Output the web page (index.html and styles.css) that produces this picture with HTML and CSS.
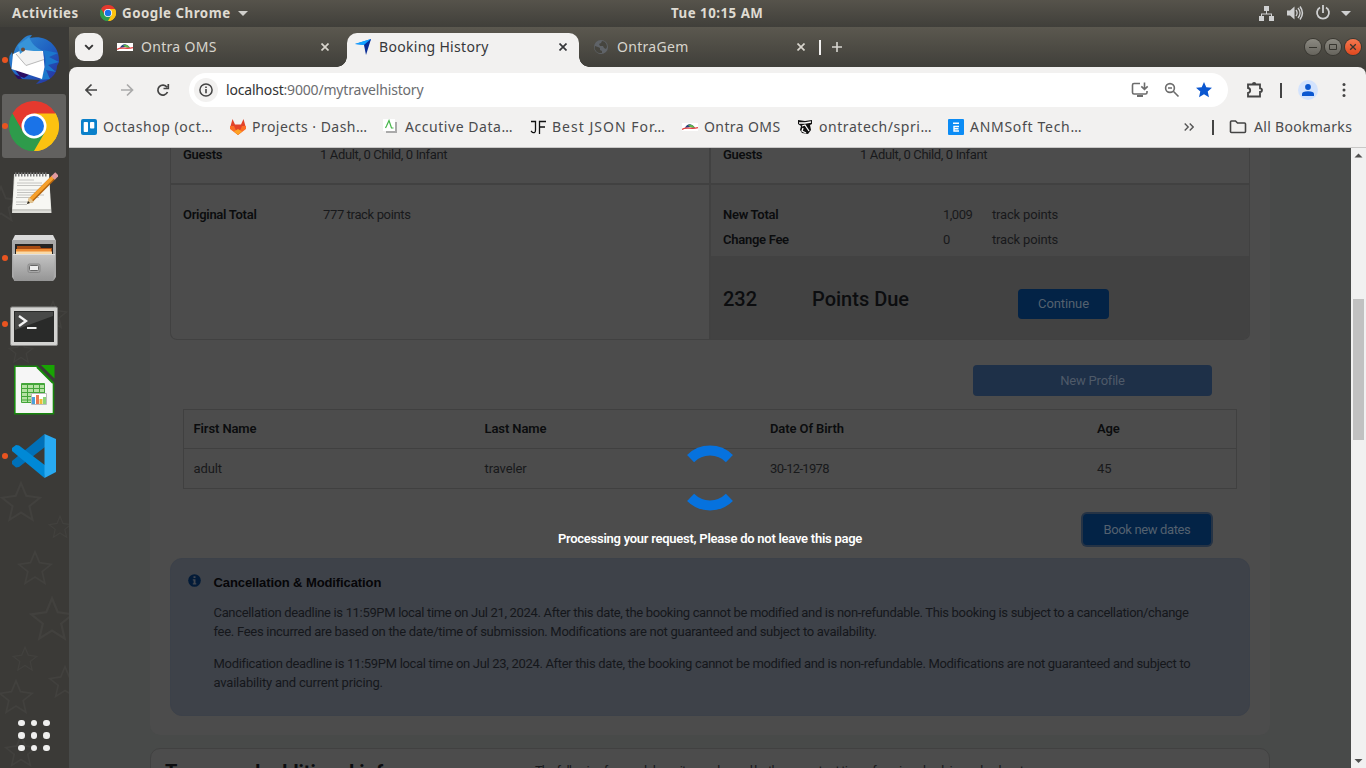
FILE: index.html
```html
<!DOCTYPE html>
<html lang="en">
<head>
<meta charset="utf-8">
<title>Booking History</title>
<link rel="stylesheet" href="styles.css">
</head>
<body>
<svg width="0" height="0" class="defs" viewBox="0 0 48 48">
  <defs>
    <symbol id="chrome" viewBox="0 0 48 48">
      <path fill="#e5392e" d="M24 24 3.200 12A24 24 0 0 1 44.800 12Z"/>
      <path fill="#fcc210" d="M24 24 44.800 12A24 24 0 0 1 24 48L22 40Z"/>
      <path fill="#2e9b4b" d="M24 24 24 48A24 24 0 0 1 3.200 12Z"/>
      <path fill="#e5392e" d="M3.200 12 13.600 30 24 12Z"/>
      <path fill="#fcc210" d="M24 48 34.400 30 24 12H44.800A24 24 0 0 1 24 48Z"/>
      <path fill="#2e9b4b" d="M3.200 12 13.600 30 34.400 30 24 48A24 24 0 0 1 3.200 12Z"/>
      <circle cx="24" cy="24" r="12" fill="#fff"/><circle cx="24" cy="24" r="9.600" fill="#1a73e8"/>
    </symbol>
    <symbol id="ontra" viewBox="0 0 16 16">
      <path fill="#fff" d="M0 4h16v8H0z"/><path fill="#27407e" d="M3 9C5 4 10 4 13 9L8 8Z"/><path fill="#5fb54a" d="M6 6C10 5 12 7 13 9L8 8Z"/>
      <path d="M0 10.500C4 7 9 11 16 8.500" fill="none" stroke="#e43d3d" stroke-width="1.200"/>
    </symbol>
    <symbol id="star" viewBox="0 0 40 40"><path d="M20 2 25 14 38 16 28 24 31 37 20 30 9 37 12 24 2 16 15 14Z" fill="none" stroke="#42413e" stroke-width="2"/></symbol>
  </defs>
</svg>

<header class="topbar">
  <span class="activities">Activities</span>
  <svg class="app-icon" width="16" height="16"><use href="#chrome"/></svg>
  <span class="app-name">Google Chrome</span>
  <svg class="caret" width="10" height="5" viewBox="0 0 10 5"><path fill="#d0cfcb" d="M0 0h10L5 5z"/></svg>
  <span class="clock">Tue 10:15 AM</span>
  <svg class="tray" width="94" height="18" viewBox="1258 4 94 18">
    <g fill="#cfd0d1"><path d="M1264 6h5v5h-5zM1259 16h5v5h-5zM1269 16h5v5h-5z"/><path d="M1266 11h1v2.500h5V16h-1v-1.500h-9V16h-1v-2.500h5z"/>
    <path d="M1287 10.500h3l4.500-4v13l-4.500-4h-3zM1341 11h10l-5 5z"/></g>
    <g fill="none" stroke="#cfd0d1"><path stroke-width="1.300" d="M1296 10c1.500 2 1.500 4 0 6M1298 8c2.500 3 2.500 7 0 10"/><path stroke-width="1.500" d="M1300 6.500c3 4 3 9 0 13"/><path stroke-width="1.800" d="M1320 7.500a6 6 0 1 0 6 0M1323 5v8"/></g>
  </svg>
</header>

<div class="desktop">
  <nav class="dock">
    <svg class="dock-bg" width="69" height="741" viewBox="0 27 69 741">
      <use href="#star" x="0" y="481" width="42" height="42"/><use href="#star" x="48" y="515" width="24" height="24"/><use href="#star" x="17" y="550" width="36" height="36"/><use href="#star" x="29" y="596" width="46" height="46"/><use href="#star" x="12" y="646" width="26" height="26"/><use href="#star" x="48" y="665" width="34" height="34"/><use href="#star" x="-2" y="679" width="36" height="36"/><use href="#star" x="4" y="734" width="34" height="34"/><use href="#star" x="38" y="300" width="30" height="30"/><use href="#star" x="8" y="338" width="26" height="26"/><use href="#star" x="-18" y="185" width="38" height="38"/>
    </svg>
    <div class="dock-item running">
      <svg width="52" height="52" viewBox="8 34 52 52">
        <defs><linearGradient id="tb" x1="0" y1="0" x2="1" y2="1"><stop offset="0" stop-color="#3292d6"/><stop offset=".55" stop-color="#1f5fc0"/><stop offset="1" stop-color="#2a2a9a"/></linearGradient></defs>
        <path fill="url(#tb)" d="M18 44C22 40 25 35 32 35L30 38C45 34 60 45 59 62L57 66C57 74 50 82 36 84L40 80 22 79C13 75 8 66 9.500 56L12 52 13 57C14 51 15 48 18 44Z"/>
        <path fill="#2b0d63" d="M12 66 22 79 18 79 14 74 24 78 30 74Z"/>
        <path fill="#1b78cd" d="M43 50 58 53 49 57 59 62 48 65 56 72 46 70 50 79 40 80C46 68 47 59 43 50Z"/>
        <path fill="#fff" d="M13 54 22 50 43 51 44.500 67 42 79 11.500 69Z"/>
        <path fill="#f2f2f2" d="M16 54 26 65.500 44 59.500 42 51 22 50Z"/><path d="M16 54 26 65.500 44 59.500" fill="none" stroke="#b9b9b9"/>
        <path fill="#3794d8" d="M18 45 29 37C32 44 36 48 43 51L34 51 25 50 20 54Z"/><circle cx="23" cy="49.500" r="2" fill="#6b4938"/>
      </svg>
    </div>
    <div class="dock-item running active"><svg width="50" height="50"><use href="#chrome"/></svg></div>
    <div class="dock-item lower">
      <svg width="48" height="48" viewBox="11 169 48 48">
        <path fill="#ddddd8" d="M15 174H50L52.500 213H13Z"/><path fill="#f7f7f3" d="M16 174H50L51.500 209H13.500Z"/><path d="M13 210H52" stroke="#bdbdb8"/>
        <path d="M16 174.500H49" stroke="#777" stroke-width="4" stroke-dasharray="1.500 1.500"/>
        <path stroke="#c4c4c1" stroke-width="1" d="M20 180H35M18 183H43M18 185.500H45M18 190H43M18 192.500H40M18 195H45M17 197.500H40M17 202H34M17 204.500H28"/>
        <path d="M31 201 55 177" stroke="#b4650f" stroke-width="5.200"/><path d="M31 200 54 177" stroke="#f6a02c" stroke-width="3.500"/><path fill="#e3c590" d="M28 204 30 197 35 202Z"/><path d="M54 178 58 174" stroke="#e09aa0" stroke-width="5"/><path fill="#222" d="m28 204 1-3 2 2z"/>
      </svg>
    </div>
    <div class="dock-item running lower">
      <svg width="46" height="48" viewBox="11 234 46 48">
        <defs><linearGradient id="cab" x1="0" y1="0" x2="0" y2="1"><stop offset="0" stop-color="#c3c3c3"/><stop offset="1" stop-color="#959595"/></linearGradient></defs>
        <path fill="#dadada" d="M15 234H53L56 240H12Z"/><path fill="#a9a9a9" d="M12 239H56V276L54 279H14L12 276Z"/><path fill="#252423" d="M15 243H53V256H15Z"/>
        <path fill="#a64b13" d="M17 245H40L41 247H52V253H17Z"/><path fill="#ed8d35" d="M16 248H51V253H16Z"/><path fill="#f9d9a6" d="M16 250.500H52V254H16Z"/>
        <path fill="url(#cab)" d="M13 253.500H55L53.500 280H14Z"/><path d="M13 253.500H55" stroke="#dedede"/>
        <rect x="28" y="263" width="12" height="8.500" rx="1.500" fill="#a8a8a8" stroke="#888"/><rect x="29.500" y="264.500" width="9" height="5" rx="1" fill="#eee" stroke="#666"/>
      </svg>
    </div>
    <div class="dock-item running lowest">
      <svg width="48" height="40" viewBox="10 306 48 40">
        <rect x="10.500" y="307" width="47" height="38.500" rx="1.500" fill="#d3d3d1" stroke="#8c8c8a"/><rect x="14" y="311" width="40" height="31" fill="#292a29"/><path fill="#484948" d="M15 312H53V316L15 330Z"/>
        <path d="M19 316 26 321 19 326" fill="none" stroke="#f3f3f3" stroke-width="2.300"/><path fill="#eee" d="M27 327h9.500v2H27z"/>
      </svg>
    </div>
    <div class="dock-item">
      <svg width="42" height="50" viewBox="13 365 42 50">
        <path fill="#f6f6f6" stroke="#17860c" stroke-width="1.600" d="M14.800 366.300H37L53.500 383V413.800H14.800Z"/><path fill="#18a303" d="M41 365H54.500V378.500Z"/><path d="M37 367 53 383" stroke="#17860c" stroke-width="2"/>
        <path fill="#b5e2a3" stroke="#43a539" d="M21.500 383.500H44.500V402.500H21.500Z"/><path d="M21 384.500H45M21 388.500H45M21 392.500H45M21 396.500H45M21 400H45M27.500 383V403M33.500 383V403M39.500 383V403" stroke="#43a539"/>
        <path fill="#fff" stroke="#bbb" d="M31.500 393.500H46.500V404.500H31.500Z"/><path fill="#4da0db" d="M32 397h3v7h-3z"/><path fill="#ea7850" d="M36 395h3v9h-3z"/><path fill="#edbd36" d="M39.500 399h3v5h-3z"/><path fill="#8bd478" d="M43 397h3v7h-3z"/>
      </svg>
    </div>
    <div class="dock-item running">
      <svg width="44" height="44" viewBox="12 434 44 44">
        <path fill="#0070b8" d="M44.500 434 12 461V464L16 467.500 19 467 45 447Z"/><path fill="#0089d6" d="M12 448 16 445 19 445.500 46 466 44.500 478 12 451Z"/><path fill="#28aaf2" d="M44.500 434 56 439V472L44.500 478Z"/>
      </svg>
    </div>
    <div class="dock-apps"><i></i><i></i><i></i><i></i><i></i><i></i><i></i><i></i><i></i></div>
  </nav>

  <main class="window">
    <div class="tabstrip">
      <button class="tab-search"><svg width="10" height="7" viewBox="0 0 10 7"><path d="M1.200 1.200 5 5 8.800 1.200" fill="none" stroke="#333" stroke-width="1.900"/></svg></button>
      <div class="tab tab-first"><svg width="16" height="16"><use href="#ontra"/></svg><span class="tab-title">Ontra OMS</span><svg class="close" width="8" height="8" viewBox="0 0 8 8"><path d="M.5.5 7.500 7.500M7.500.5.500 7.500"/></svg></div>
      <div class="tab tab-current"><svg width="16" height="16" viewBox="0 0 16 16"><path fill="#0b6df0" d="M0 5 16 0 12 9 10 6Z"/><path fill="#11a2ff" d="M0 5 16 0 9 6Z"/><path fill="#092d96" d="M9 6 16 0 11 16Z"/></svg><span class="tab-title">Booking History</span><svg class="close" width="8" height="8" viewBox="0 0 8 8"><path d="M.5.5 7.500 7.500M7.500.5.500 7.500"/></svg></div>
      <div class="tab tab-last"><svg width="16" height="16" viewBox="0 0 16 16"><circle cx="8" cy="8" r="7" fill="#5f6368"/><path fill="#46453f" d="M2 7 5 8 7 9V11L9 12V14L6 14C3 13 1 10 2 7ZM9 2 8 4 6 5 7 7 10 7 11 9 13 10 14 8C14 5 12 2 9 2Z"/></svg><span class="tab-title">OntraGem</span><svg class="close" width="8" height="8" viewBox="0 0 8 8"><path d="M.5.5 7.500 7.500M7.500.5.500 7.500"/></svg></div>
      <i class="tab-bar"></i>
      <svg class="plus" width="10" height="10" viewBox="0 0 10 10"><path d="M5 0v10M0 5h10" stroke="#d8d6d0" stroke-width="1.600"/></svg>
      <div class="controls">
        <svg width="16" height="16" viewBox="0 0 16 16"><path d="M4 8.500h8"/></svg>
        <svg width="16" height="16" viewBox="0 0 16 16"><path d="M4.500 5.500h7v5h-7z"/></svg>
        <svg class="quit" width="16" height="16" viewBox="0 0 16 16"><path d="m5.200 5.200 5.600 5.600m0-5.600-5.600 5.600"/></svg>
      </div>
    </div>

    <div class="chrome-body">
      <div class="toolbar">
        <svg class="nav-icons" width="90" height="14" viewBox="0 0 90 14"><g fill="none" stroke="#444" stroke-width="1.700"><path d="M12 7H1.500M6.500 1.500 1 7l5.500 5.500"/><path stroke="#aaa" d="M36 7h11M42 1.500 47.500 7 42 12.500"/><path d="M82 4.200A5 5 0 1 0 82.500 9M83.300 1v4.500H78.500"/></g></svg>
        <div class="omnibox">
          <span class="site-info"><svg width="14" height="14" viewBox="0 0 14 14"><circle cx="7" cy="7" r="6.100" fill="none" stroke="#444" stroke-width="1.500"/><path fill="#444" d="M6.200 6h1.600v4.300H6.200zM6.200 3.500h1.600V5H6.200z"/></svg></span>
          <span class="url"><b>localhost</b>:9000/mytravelhistory</span>
          <svg class="omni-icons" width="82" height="18" viewBox="1131 81 82 18"><g fill="none" stroke="#6c6c6c" stroke-width="1.600"><path d="M1140 83.500H1134Q1132.500 83.500 1132.500 85V92.500Q1132.500 94 1134 94H1145.500Q1147 94 1147 92.500V91M1144.500 82.500V89M1141.300 86.300 1144.500 89.300 1147.700 86.300"/><circle cx="1170" cy="88" r="4.400"/><path d="M1173.300 91.300 1178.500 96.500M1168 88H1172"/></g><path fill="#6c6c6c" d="M1137 95h6v2h-6z"/><path fill="#0b57d0" d="M1204 82 1206.300 87.300 1212 87.800 1207.700 91.600 1209 97.300 1204 94.300 1199 97.300 1200.300 91.600 1196 87.800 1201.700 87.300Z"/></svg>
        </div>
        <svg class="ext" width="18" height="18" viewBox="0 0 18 18"><path d="M2 3.500H14V7.300Q16 7.300 16 9Q16 11 14 11V15.500H2V12Q4.200 11.700 4.200 9.500Q4.200 7.300 2 7Z" fill="none" stroke="#444" stroke-width="1.800"/><path fill="#444" d="M6 3a2.100 2.100 0 0 1 4.200 0z"/></svg>
        <i class="divider"></i>
        <span class="avatar"><svg width="12" height="12" viewBox="0 0 12 12"><circle cx="6" cy="3" r="2.900" fill="#0b57d0"/><path fill="#0b57d0" d="M0 12V10Q0 7.300 6 7.300T12 10V12Z"/></svg></span>
        <svg width="4" height="14" viewBox="0 0 4 14"><g fill="#444"><circle cx="2" cy="1.600" r="1.500"/><circle cx="2" cy="7" r="1.500"/><circle cx="2" cy="12.400" r="1.500"/></g></svg>
      </div>
      <div class="bookmarks">
        <div class="bm bm-a"><svg width="16" height="16" viewBox="0 0 16 16"><rect width="16" height="16" rx="2" fill="#0a80ca"/><rect x="2.700" y="3" width="4.300" height="10" rx=".8" fill="#fff"/><rect x="9" y="3" width="4.300" height="6.500" rx=".8" fill="#fff"/></svg><span>Octashop (oct…</span></div>
        <div class="bm bm-b"><svg width="16" height="16" viewBox="0 0 16 16"><path fill="#e24329" d="M2.500 0 5 5.500H11L13.500 0 16 9 8 16 0 9Z"/><path fill="#fc6d26" d="M0 7 4 7 8 16 0 10ZM16 7 12 7 8 16 16 10Z"/><path fill="#fca326" d="m8 16-4-3.500L8 10l4 2.500z"/></svg><span>Projects · Dash…</span></div>
        <div class="bm bm-c"><svg width="16" height="16" viewBox="0 0 16 16"><path fill="#aaa" d="M3 3h11v11H3z"/><path fill="#fff" d="M0 0h12v12H0z"/><path d="M2.500 9 3.500 7 6 1.500 8.500 9H10.500" fill="none" stroke="#45b649" stroke-width="1.200"/></svg><span>Accutive Data…</span></div>
        <div class="bm bm-d"><svg width="16" height="16" viewBox="0 0 16 16"><path d="M1 2.500H5.500V11Q5.500 14.500 2.500 13.500L1 12M9.500 15V2.500H16M9.500 8H15" fill="none" stroke="#111" stroke-width="1.300"/></svg><span>Best JSON For…</span></div>
        <div class="bm bm-e"><svg width="16" height="16"><use href="#ontra"/></svg><span>Ontra OMS</span></div>
        <div class="bm bm-f"><svg width="16" height="16" viewBox="0 0 16 16"><path fill="#111" d="M1 1 8 2 15 1V5L13 6 14 11 11 15 5 14 3 11 4 7 1 5Z"/><path d="M2 4 8 4 14 3M5 7 8 6 10 9 12 12M6 9 5 12 9 14" stroke="#fff" fill="none" stroke-width="1.300"/></svg><span>ontratech/spri…</span></div>
        <div class="bm bm-g"><svg width="16" height="16" viewBox="0 0 16 16"><rect width="16" height="16" rx="1" fill="#0c8cf5"/><path d="M5 4.200H11M11 7.500H6V12H11M6 9.700H10.500" fill="none" stroke="#fff" stroke-width="1.400"/></svg><span>ANMSoft Tech…</span></div>
        <svg class="more" width="10" height="8" viewBox="0 0 10 8"><path d="m.7.5 3.500 3.500L.7 7.500M5.700.500 9.200 4 5.700 7.500" fill="none" stroke="#555" stroke-width="1.400"/></svg>
        <i class="divider"></i>
        <svg class="folder" width="18" height="14" viewBox="0 0 18 14"><path d="M1.500 12V2Q1.500 1 2.500 1H6.500L8.500 3H15.500Q16.500 3 16.500 4V11.500Q16.500 12.500 15.500 12.500H2.500Q1.500 12.500 1.500 11.500Z" fill="none" stroke="#444" stroke-width="1.600"/></svg>
        <span class="all">All Bookmarks</span>
      </div>
    </div>

    <div class="viewport">
      <div class="page">
        <section class="card">
          <div class="compare">
            <div class="cell guests"><b>Guests</b><span>1 Adult, 0 Child, 0 Infant</span></div>
            <div class="cell guests right"><b>Guests</b><span>1 Adult, 0 Child, 0 Infant</span></div>
            <div class="cell original"><b>Original Total</b><span>777 track points</span></div>
            <div class="right totals">
              <div class="rows">
                <div class="row"><b>New Total</b><span class="num">1,009</span><span class="unit">track points</span></div>
                <div class="row"><b>Change Fee</b><span class="num">0</span><span class="unit">track points</span></div>
              </div>
              <div class="due"><strong class="amount">232</strong><strong class="due-label">Points Due</strong><button class="btn continue">Continue</button></div>
            </div>
          </div>
          <button class="btn new-profile">New Profile</button>
          <div class="people">
            <div class="prow head"><span>First Name</span><span>Last Name</span><span>Date Of Birth</span><span>Age</span></div>
            <div class="prow"><span>adult</span><span>traveler</span><span class="dob">30-12-1978</span><span>45</span></div>
          </div>
          <button class="btn book">Book new dates</button>
          <div class="notice">
            <svg width="13" height="13" viewBox="0 0 13 13"><circle cx="6.500" cy="6.500" r="6.300" fill="#031b38"/><path fill="#42474f" d="M5.500 2.300h2v1.800h-2zM4.800 5.300h2.700v3.900h.8v1.200H4.800V9.200h.8V6.500h-.8z"/></svg>
            <div class="notice-text">
              <h2>Cancellation &amp; Modification</h2>
              <p><span class="l1">Cancellation deadline is 11:59PM local time on Jul 21, 2024. After this date, the booking cannot be modified and is non-refundable. This booking is subject to a cancellation/change</span><br><span class="l2">fee. Fees incurred are based on the date/time of submission. Modifications are not guaranteed and subject to availability.</span></p>
              <p><span class="l3">Modification deadline is 11:59PM local time on Jul 23, 2024. After this date, the booking cannot be modified and is non-refundable. Modifications are not guaranteed and subject to</span><br><span class="l4">availability and current pricing.</span></p>
            </div>
          </div>
        </section>
        <section class="card terms"><h2>Terms and additional info</h2><p>The following fees and deposits are charged by the property at time of service, check-in, or check-out.</p></section>
        <div class="loader">
          <svg width="66" height="66" viewBox="-33 -33 66 66"><g fill="none" stroke="#0672de" stroke-width="10"><path d="M-19.400-19.400A27.500 27.500 0 0 1 19.400-19.400M-19.400 19.400A27.500 27.500 0 0 0 19.400 19.400"/></g></svg>
          <span>Processing your request, Please do not leave this page</span>
        </div>
      </div>
      <div class="scrollbar">
        <svg width="15" height="15" viewBox="0 0 15 15"><path fill="#505050" d="M3.500 9.500h8l-4-4z"/></svg>
        <i class="thumb"></i>
        <svg width="15" height="15" viewBox="0 0 15 15"><path fill="#505050" d="M3.500 6h8l-4 4z"/></svg>
      </div>
    </div>
  </main>
</div>
</body>
</html>
```
FILE: styles.css
```css
* { box-sizing: border-box; }
body { margin: 0; width: 1366px; height: 768px; overflow: hidden; font-family: "Noto Sans", "Open Sans", sans-serif; font-size: 14px; display: flex; flex-direction: column; background: #3c3b37; }
.defs { position: absolute; }
svg { flex: none; display: block; }
i { display: block; flex: none; }
button { border: 0; padding: 0; font: inherit; }

.topbar { height: 27px; flex: none; display: flex; align-items: center; padding: 0 14px 1px 12px; background: linear-gradient(#56534b, #403f3a); color: #dfdbd2; font-size: 13.300px; font-weight: 700; letter-spacing: .5px; white-space: nowrap; }
.activities { width: 88px; }
.app-name { margin-left: 6px; width: 112px; }
.caret { margin-left: 4px; }
.clock { margin-left: 423px; width: 96px; }
.tray { margin-left: auto; }

.desktop { flex: 1; display: flex; min-height: 0; }
.dock { position: relative; width: 69px; flex: none; background: #3b3a37; display: flex; flex-direction: column; }
.dock-bg { position: absolute; inset: 0; }
.dock-item { position: relative; height: 66px; width: 68px; display: flex; align-items: center; justify-content: center; }
.lower { padding-top: 2px; }
.lowest { padding-top: 3px; }
.running::before { content: ""; position: absolute; left: 2px; top: 30px; width: 6px; height: 6px; border-radius: 3px; background: #e95420; }
.active::after { content: ""; position: absolute; left: 2px; top: 1px; width: 64px; height: 64px; border-radius: 3px; background: rgba(255,255,255,.2); z-index: 0; }
.active::before { z-index: 1; }
.active svg { position: relative; z-index: 1; }
.dock-apps { position: relative; margin: auto 0 17px 18px; display: grid; grid-template-columns: repeat(3, 6.500px); gap: 6px; }
.dock-apps i { height: 6.500px; border-radius: 50%; background: #efefee; }

.window { flex: 1; display: flex; flex-direction: column; min-width: 0; background: linear-gradient(#5b584f 0, #403f3a 40px); }
.tabstrip { height: 40px; flex: none; display: flex; align-items: center; padding: 0 5px 0 6px; }
.tab-search { width: 28px; height: 28px; border-radius: 9px; background: #f2f1f0; display: grid; place-items: center; }
.tab { display: flex; align-items: center; color: #d8d5cd; height: 34px; margin-top: 6px; padding-bottom: 6px; letter-spacing: .3px; }
.tab-title { margin-left: 8px; flex: 1; line-height: 20px; }
.close { fill: none; stroke: currentColor; stroke-width: 1.700; }
.tab-first { width: 212px; margin-left: 14px; }
.tab-current { width: 232px; margin-left: 18px; padding: 0 12px 6px 8px; background: #f2f1f0; color: #36373a; border-radius: 10px 10px 0 0; position: relative; }
.tab-current::before, .tab-current::after { content: ""; position: absolute; bottom: 0; width: 10px; height: 10px; }
.tab-current::before { left: -10px; background: radial-gradient(circle at 0 0, transparent 9.500px, #f2f1f0 10px); }
.tab-current::after { right: -10px; background: radial-gradient(circle at 100% 0, transparent 9.500px, #f2f1f0 10px); }
.tab-last { width: 212px; margin-left: 14px; }
.tab-bar { width: 2px; height: 15px; background: #f2f1f0; margin-left: 14px; }
.plus { margin-left: 11px; }
.controls { margin-left: auto; display: flex; gap: 4px; }
.controls svg { border-radius: 50%; background: linear-gradient(#8c8a82, #66645d); fill: none; stroke: #36352f; box-shadow: 0 0 0 1px #393832; }
.controls .quit { background: linear-gradient(#f4784f, #e1481e); stroke-width: 1.300; }

.chrome-body { height: 81px; flex: none; background: #f2f1f0; border-radius: 8px 8px 0 0; border-bottom: 1px solid #c9c8c7; color: #4a4b4d; }
.toolbar { padding-top: 6px; display: flex; align-items: center; height: 40px; padding-left: 16px; }
.nav-icons { width: 90px; }
.omnibox { margin-left: 14px; width: 1039px; height: 34px; border-radius: 17px; background: #fff; display: flex; align-items: center; padding: 0 15px 0 5px; }
.site-info { width: 24px; height: 24px; border-radius: 50%; background: #f2f1f0; display: grid; place-items: center; }
.url { margin-left: 8px; padding-bottom: 2px; color: #6c6d70; letter-spacing: -.18px; }
.url b { font-weight: 400; color: #333; }
.omni-icons { margin-left: auto; }
.ext { margin-left: 18px; }
.divider { width: 2px; height: 15px; background: #444; margin-left: 16px; }
.avatar { width: 20px; height: 20px; border-radius: 50%; background: #d3e3fd; display: grid; place-items: center; margin: 0 24px 0 16px; }
.bookmarks { height: 40px; display: flex; align-items: center; padding-left: 12px; white-space: nowrap; }
.bm { display: flex; align-items: center; gap: 6px; flex: none; letter-spacing: .55px; }
.bm span, .all { padding-bottom: 2px; }
.bm-a { width: 149px; }
.bm-b { width: 153px; letter-spacing: .47px; }
.bm-c { width: 147px; }
.bm-d { width: 152px; letter-spacing: 1.020px; }
.bm-e { width: 115px; letter-spacing: .4px; }
.bm-f { width: 151px; }
.bm-g { width: 236px; letter-spacing: .7px; }
.all { letter-spacing: .3px; }
.bookmarks .divider { margin-left: 18px; }
.folder { margin: 0 7px 0 15px; }

.viewport { flex: 1; display: flex; min-height: 0; background: #484a49; }
.page { position: relative; flex: 1; overflow: hidden; padding: 0 81px; font: 13px/19px Roboto, sans-serif; color: #18191b; }
.page b, .head { font-weight: 600; color: #0b0c0e; letter-spacing: -.28px; }
.card { width: 1120px; background: #4c4c4c; height: 587px; border-radius: 0 0 10px 10px; padding: 0 20px; display: flex; flex-direction: column; }
.compare { flex: none; height: 192px; display: grid; grid-template-columns: 539px 539px; grid-template-rows: 37px 154px; border: solid #414141; border-width: 0 1px 1px; border-radius: 0 0 7px 7px; overflow: hidden; width: 1080px; }
.cell { display: flex; padding-left: 12px; letter-spacing: -.36px; }
.cell b { width: 137px; }
.guests { border-bottom: 2px solid #414141; line-height: 14px; }
.right { border-left: 2px solid #414141; margin-left: -1px; }
.original { padding-top: 20px; }
.original b { width: 140px; }
.totals { display: flex; flex-direction: column; }
.rows { height: 71px; background: #484848; padding: 17px 0 0 12px; }
.row { display: grid; grid-template-columns: 220px 49px 1fr; line-height: 25px; }
.num { letter-spacing: -.5px; }
.unit { letter-spacing: -.17px; }
.due { flex: 1; background: #424242; display: flex; align-items: flex-start; padding-left: 12px; color: #0c0d0f; }
.due strong { font-size: 20px; line-height: 24px; margin-top: 31px; font-weight: 500; }
.amount { width: 89px; }
.due-label { width: 206px; }
.btn { border-radius: 4px; background: #032346; color: #54616f; flex: none; }
.continue { width: 91px; height: 30px; margin-top: 33px; padding-bottom: 1px; letter-spacing: -.1px; }
.new-profile { width: 239px; height: 31px; margin: 25px 38px 0 auto; background: #1e3048; color: #4f5a68; letter-spacing: -.22px; }
.people { width: 1054px; height: 80px; margin: 13px 0 0 13px; border: 1px solid #404040; flex: none; }
.prow { height: 40px; line-height: 39px; padding-left: 9.500px; display: grid; grid-template-columns: 291px 285.500px 327px 1fr; letter-spacing: -.1px; }
.head { height: 39px; line-height: 37px; border-bottom: 1px solid #404040; }
.dob { letter-spacing: -.68px; }
.book { width: 128px; height: 31px; margin: 25px 39px 0 auto; box-shadow: 0 0 0 2px #253345; letter-spacing: -.37px; }
.notice { height: 158px; flex: none; margin-top: 13px; background: #3e4249; border: 1px solid #3c4149; border-radius: 12px; display: flex; padding: 15px 0 0 17px; color: #15171b; }
.notice-text { margin: -1px 0 0 12.500px; white-space: nowrap; }
.notice h2 { margin: 0 0 11px; font: bold 13px/19px "Liberation Sans", sans-serif; letter-spacing: -.1px; color: #060608; }
.notice p { margin: 0 0 13px; }
.l1 { letter-spacing: -.33px; }
.l2 { letter-spacing: -.28px; }
.l3 { letter-spacing: -.315px; }
.l4 { letter-spacing: -.2px; }
.terms { height: 40px; margin-top: 13px; border: 1px solid #414141; border-radius: 10px; padding: 11px 14px 0; flex-direction: row; align-items: flex-start; white-space: nowrap; }
.terms h2 { width: 370px; margin: 0; font-size: 20px; line-height: 24px; color: #0c0d0f; }
.terms p { margin: 1px 0 0; letter-spacing: -.9px; }
.loader { position: absolute; left: 0; right: 0; top: 297px; display: flex; flex-direction: column; align-items: center; color: #fff; font-weight: 600; letter-spacing: -.26px; }
.loader span { margin-top: 18px; }
.scrollbar { width: 15px; background: #f1f1f1; display: flex; flex-direction: column; }
.thumb { width: 11px; height: 141px; margin: 136px 2px auto; background: #c1c1c1; }
```
